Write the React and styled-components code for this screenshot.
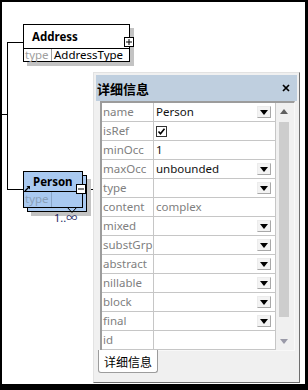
import React from 'react';
import styled, { createGlobalStyle } from 'styled-components';

const Global = createGlobalStyle`
  html, body { margin: 0; padding: 0; background: #fff; }
  body { font-family: "Noto Sans", "Noto Sans CJK SC", sans-serif; }
`;

const UI = '"Noto Sans", "Noto Sans CJK SC", sans-serif';
const CJK = '"Noto Sans CJK SC", "Noto Sans", sans-serif';

const Frame = styled.div`
  position: relative;
  width: 308px;
  height: 390px;
  box-sizing: border-box;
  border-style: solid;
  border-color: #000;
  border-width: 2px 3px 6px 2px;
  background: #fff;
  overflow: hidden;
  font-family: ${UI};
`;

const Wires = styled.svg`
  position: absolute;
  left: -2px;
  top: -2px;
  width: 308px;
  height: 390px;
`;

/* ---------- diagram nodes ---------- */
const Node = styled.div`
  position: absolute;
  left: ${p => p.$x - 2}px;
  top: ${p => p.$y - 2}px;
  width: ${p => p.$w}px;
  height: ${p => p.$h}px;
  box-sizing: border-box;
  border: 1px solid #000;
  background: ${p => (p.$blue ? '#a9c9f0' : '#fff')};
  box-shadow: ${p => (p.$shadow ? '4px 4px 0 #c3c3c3' : 'none')};
  display: flex;
  flex-direction: column;
`;

const NodeTitle = styled.div`
  position: relative;
  height: ${p => p.$h}px;
  box-sizing: border-box;
  border-bottom: 1px solid #000;
  padding-left: ${p => p.$pad}px;
  display: flex;
  align-items: center;
  font-size: 11.5px;
  font-weight: 700;
  color: #000;
  padding-bottom: 1px;
`;

const NodeRow = styled.div`
  flex: 1;
  display: flex;
  font-size: 11.5px;
  line-height: ${p => p.$lh}px;
`;

const TypeCell = styled.div`
  width: 26px;
  padding-left: 1px;
  border-right: 1px solid ${p => (p.$blue ? '#8aa6c8' : '#a0a0a0')};
  color: ${p => (p.$blue ? '#8aa0b8' : '#a0a0a0')};
`;

const TypeValue = styled.div`
  padding-left: 2px;
  color: #000;
`;

const Toggle = styled.svg`
  position: absolute;
  left: ${p => p.$x}px;
  top: ${p => p.$y}px;
  width: 10px;
  height: 10px;
  overflow: visible;
`;

const RefArrow = styled.svg`
  position: absolute;
  left: 0px;
  top: 13px;
  width: 7px;
  height: 7px;
`;

const Notch = styled.svg`
  position: absolute;
  left: ${66 - 2}px;
  top: ${206 - 2}px;
  width: 12px;
  height: 8px;
`;

const Cardinality = styled.div`
  position: absolute;
  left: ${54 - 2}px;
  top: ${211 - 2}px;
  font-size: 11px;
  line-height: 14px;
  color: #24245e;
`;

/* ---------- detail panel ---------- */
const Panel = styled.section`
  position: absolute;
  left: ${93 - 2}px;
  top: ${72 - 2}px;
  width: 207px;
  height: 311px;
  box-sizing: border-box;
  border: 1px solid;
  border-color: #e2e2e2 #6e6e6e #6e6e6e #e2e2e2;
  background: #f0f0f0;
  padding: 2px;
  display: flex;
  flex-direction: column;
`;

const TitleBar = styled.header`
  height: 26px;
  flex: none;
  background: #bfcfdf;
  display: flex;
  align-items: center;
  justify-content: space-between;
  padding: 0 7px 0 1px;
  font-family: ${CJK};
  font-size: 13px;
  font-weight: 700;
  color: #000;
`;

const CloseIcon = styled.svg`
  width: 8px;
  height: 8px;
`;

const Content = styled.div`
  flex: none;
  display: flex;
  margin: 0 2px 0 4px;
  border-style: solid;
  border-color: #9c9c9c #f8f8f8 #f8f8f8 #9c9c9c;
  border-width: 2px 1px 1px 2px;
  background: #fff;
`;

const Table = styled.div`
  display: flex;
  flex-direction: column;
`;

const Row = styled.div`
  display: grid;
  grid-template-columns: 52px 122px;
  height: 19px;
  box-sizing: border-box;
  border-bottom: 1px solid #c6c6c6;
  font-size: 11.5px;
  line-height: 18px;
`;

const Label = styled.div`
  padding-left: 1px;
  border-right: 1px solid #c6c6c6;
  color: #808080;
  white-space: nowrap;
  overflow: hidden;
`;

const Value = styled.div`
  display: flex;
  align-items: center;
  padding-left: 2px;
  border-right: 1px solid #c6c6c6;
  color: ${p => (p.$muted ? '#808080' : '#111')};
  white-space: nowrap;
`;

const DropButton = styled.span`
  margin-left: auto;
  margin-right: 4px;
  width: 14px;
  height: 12px;
  box-sizing: border-box;
  border: 1px solid;
  border-color: #ececec #a8a8a8 #a8a8a8 #ececec;
  background: #f3f3f3;
  display: flex;
  align-items: center;
  justify-content: center;
`;

const Check = styled.svg`
  width: 11px;
  height: 11px;
  box-sizing: border-box;
  border: 1px solid #333;
  background: #fff;
`;

const Scrollbar = styled.div`
  width: 18px;
  background: #f0f0f0;
  display: flex;
  flex-direction: column;
  align-items: center;
`;

const ScrollArrow = styled.div`
  height: 17px;
  width: 100%;
  display: flex;
  align-items: center;
  justify-content: center;
  padding-right: 3px;
  box-sizing: border-box;
`;

const Thumb = styled.div`
  width: 10px;
  margin-right: 3px;
  margin-top: 2px;
  flex: 1;
  background: #cdcdcd;
  margin-bottom: 16px;
`;

const TabStrip = styled.div`
  flex: 1;
  display: flex;
  padding-left: 2px;
`;

const Tab = styled.div`
  margin-top: -1px;
  width: 60px;
  height: 23px;
  box-sizing: border-box;
  background: #fff;
  border: 1px solid #9c9c9c;
  border-top: none;
  border-radius: 0 0 3px 3px;
  display: flex;
  align-items: center;
  justify-content: center;
  font-family: ${CJK};
  font-size: 12px;
  color: #000;
`;

const rows = [
  { label: 'name', value: 'Person', dd: true },
  { label: 'isRef', check: true },
  { label: 'minOcc', value: '1' },
  { label: 'maxOcc', value: 'unbounded', dd: true },
  { label: 'type', dd: true },
  { label: 'content', value: 'complex', muted: true },
  { label: 'mixed', dd: true },
  { label: 'substGrp', dd: true },
  { label: 'abstract', dd: true },
  { label: 'nillable', dd: true },
  { label: 'block', dd: true },
  { label: 'final', dd: true },
  { label: 'id' },
];

const Tri = ({ up, color }) => (
  <svg width="8" height="5" viewBox="0 0 8 5">
    {up ? (
      <polygon points="0,5 8,5 4,0" fill={color} />
    ) : (
      <polygon points="0,0 8,0 4,5" fill={color} />
    )}
  </svg>
);

const PlusMinus = ({ x, y, plus }) => (
  <Toggle $x={x} $y={y} viewBox="0 0 10 10">
    <rect x="0.5" y="0.5" width="9" height="9" fill="#fff" stroke="#000" />
    <line x1="2" y1="5" x2="8" y2="5" stroke="#000" />
    {plus && <line x1="5" y1="2" x2="5" y2="8" stroke="#000" />}
  </Toggle>
);

export default function App() {
  return (
    <>
      <Global />
      <Frame>
        <Wires viewBox="0 0 308 390">
          <g stroke="#000" strokeWidth="1" fill="none" shapeRendering="crispEdges">
            <line x1="0" y1="114.5" x2="8" y2="114.5" />
            <line x1="7.5" y1="42" x2="7.5" y2="190" />
            <line x1="7" y1="42.5" x2="23" y2="42.5" />
            <line x1="7" y1="189.5" x2="23" y2="189.5" />
            <line x1="86" y1="189.5" x2="94" y2="189.5" />
          </g>
        </Wires>

        <Node $x={23} $y={24} $w={107} $h={38} $shadow>
          <NodeTitle $h={24} $pad={8}>Address</NodeTitle>
          <NodeRow $lh={12}>
            <TypeCell>type</TypeCell>
            <TypeValue>AddressType</TypeValue>
          </NodeRow>
          <PlusMinus x={100} y={12} plus />
        </Node>

        <Node $x={27} $y={175} $w={60} $h={37} $blue $shadow />
        <Node $x={23} $y={171} $w={60} $h={37} $blue>
          <NodeTitle $h={20} $pad={9}>
            <RefArrow viewBox="0 0 7 7">
              <line x1="1" y1="6" x2="5" y2="2" stroke="#000" strokeWidth="1.2" />
              <polygon points="2.5,1 6,1 6,4.5" fill="#000" />
            </RefArrow>
            Person
          </NodeTitle>
          <NodeRow $lh={14}>
            <TypeCell $blue>type</TypeCell>
          </NodeRow>
          <PlusMinus x={52} y={12} />
        </Node>
        <Notch viewBox="0 0 12 8">
          <polyline points="1,1 6,6.5 11,1" fill="none" stroke="#000" strokeWidth="1" />
        </Notch>
        <Cardinality>1..∞</Cardinality>

        <Panel>
          <TitleBar>
            详细信息
            <CloseIcon viewBox="0 0 8 8">
              <path d="M1 1 L7 7 M7 1 L1 7" stroke="#000" strokeWidth="1.7" />
            </CloseIcon>
          </TitleBar>
          <Content>
            <Table>
              {rows.map(r => (
                <Row key={r.label}>
                  <Label>{r.label}</Label>
                  <Value $muted={r.muted}>
                    {r.value}
                    {r.check && (
                      <Check viewBox="0 0 9 9">
                        <polyline points="1.5,4.5 3.5,6.8 7.5,1.8" fill="none" stroke="#000" strokeWidth="1.6" />
                      </Check>
                    )}
                    {r.dd && (
                      <DropButton>
                        <Tri color="#000" />
                      </DropButton>
                    )}
                  </Value>
                </Row>
              ))}
            </Table>
            <Scrollbar>
              <ScrollArrow>
                <Tri up color="#606060" />
              </ScrollArrow>
              <Thumb />
              <ScrollArrow>
                <Tri color="#9a9aa8" />
              </ScrollArrow>
            </Scrollbar>
          </Content>
          <TabStrip>
            <Tab>详细信息</Tab>
          </TabStrip>
        </Panel>
      </Frame>
    </>
  );
}
